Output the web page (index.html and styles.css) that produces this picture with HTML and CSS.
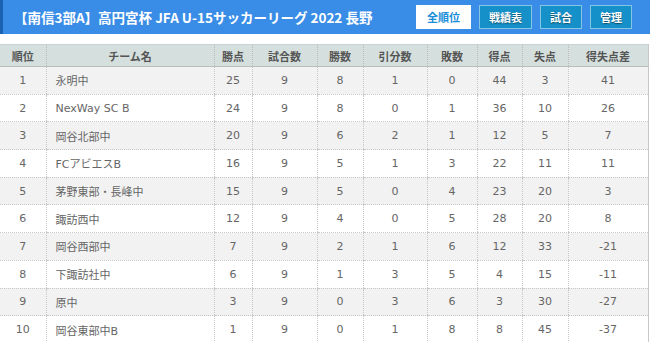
FILE: index.html
```html
<!DOCTYPE html>
<html lang="ja">
<head>
<meta charset="utf-8">
<link rel="stylesheet" href="styles.css">
</head>
<body>
<div class="bar">
  <h1 class="title">【南信3部A】高円宮杯 JFA U-15サッカーリーグ 2022 長野</h1>
  <nav class="nav">
    <span class="btn active">全順位</span>
    <span class="btn">戦績表</span>
    <span class="btn">試合</span>
    <span class="btn">管理</span>
  </nav>
</div>
<table class="standings">
  <colgroup>
    <col style="width:46px"><col style="width:168px"><col style="width:38px"><col style="width:65px"><col style="width:46px"><col style="width:64px"><col style="width:50px"><col style="width:45px"><col style="width:46px"><col style="width:80px">
  </colgroup>
  <thead>
    <tr><th>順位</th><th>チーム名</th><th>勝点</th><th>試合数</th><th>勝数</th><th>引分数</th><th>敗数</th><th>得点</th><th>失点</th><th>得失点差</th></tr>
  </thead>
  <tbody>
    <tr><td>1</td><td class="name">永明中</td><td>25</td><td>9</td><td>8</td><td>1</td><td>0</td><td>44</td><td>3</td><td>41</td></tr>
    <tr><td>2</td><td class="name">NexWay SC B</td><td>24</td><td>9</td><td>8</td><td>0</td><td>1</td><td>36</td><td>10</td><td>26</td></tr>
    <tr><td>3</td><td class="name">岡谷北部中</td><td>20</td><td>9</td><td>6</td><td>2</td><td>1</td><td>12</td><td>5</td><td>7</td></tr>
    <tr><td>4</td><td class="name">FCアビエスB</td><td>16</td><td>9</td><td>5</td><td>1</td><td>3</td><td>22</td><td>11</td><td>11</td></tr>
    <tr><td>5</td><td class="name">茅野東部・長峰中</td><td>15</td><td>9</td><td>5</td><td>0</td><td>4</td><td>23</td><td>20</td><td>3</td></tr>
    <tr><td>6</td><td class="name">諏訪西中</td><td>12</td><td>9</td><td>4</td><td>0</td><td>5</td><td>28</td><td>20</td><td>8</td></tr>
    <tr><td>7</td><td class="name">岡谷西部中</td><td>7</td><td>9</td><td>2</td><td>1</td><td>6</td><td>12</td><td>33</td><td>-21</td></tr>
    <tr><td>8</td><td class="name">下諏訪社中</td><td>6</td><td>9</td><td>1</td><td>3</td><td>5</td><td>4</td><td>15</td><td>-11</td></tr>
    <tr><td>9</td><td class="name">原中</td><td>3</td><td>9</td><td>0</td><td>3</td><td>6</td><td>3</td><td>30</td><td>-27</td></tr>
    <tr><td>10</td><td class="name">岡谷東部中B</td><td>1</td><td>9</td><td>0</td><td>1</td><td>8</td><td>8</td><td>45</td><td>-37</td></tr>
  </tbody>
</table>
</body>
</html>
```
FILE: styles.css
```css
html, body {
  margin: 0;
  padding: 0;
  background: #fff;
}
body {
  font-family: "DejaVu Sans", "Noto Sans CJK JP", sans-serif;
  color: #666;
  width: 650px;
  overflow: hidden;
}
.bar {
  height: 34px;
  background: #3a8de6;
  border-left: 3px solid #1b62b2;
  display: flex;
  align-items: center;
  justify-content: space-between;
  padding: 0 18px 0 11px;
  box-sizing: border-box;
}
.title {
  margin: 0;
  font-family: "Noto Sans CJK JP", sans-serif;
  font-size: 13.5px;
  font-weight: bold;
  color: #fff;
  white-space: nowrap;
}
.nav {
  display: flex;
  gap: 8px;
}
.btn {
  display: flex;
  align-items: center;
  justify-content: center;
  height: 24px;
  box-sizing: border-box;
  padding: 0 9px;
  background: #1590c8;
  border: 1px solid #86c4e4;
  color: #fff;
  font-family: "Noto Sans CJK JP", sans-serif;
  font-size: 11px;
  font-weight: bold;
  text-shadow: 0 1px 1px rgba(0,0,0,0.45);
}
.btn.active {
  background: #fff;
  color: #1a8ed8;
  border-color: #fff;
  padding: 0 10px;
  text-shadow: none;
}
.standings {
  margin-top: 10px;
  width: 648px;
  border-collapse: collapse;
  table-layout: fixed;
  font-size: 11px;
  border-top: 1px solid #c9d3d2;
  border-right: 1px solid #c8c8c8;
}
.standings th {
  height: 21px;
  background: #d5e0de;
  color: #555;
  font-family: "Noto Sans CJK JP", sans-serif;
  font-weight: bold;
  font-size: 11px;
  padding: 0;
  border-left: 1px dotted #bbb;
  border-bottom: 1px solid #b8c0bf;
}
.standings th:first-child,
.standings td:first-child { border-left: none; }
.standings td {
  height: 26.7px;
  padding: 0;
  text-align: center;
  border-left: 1px dotted #c8c8c8;
  border-bottom: 1px dotted #c8c8c8;
  white-space: nowrap;
}
.standings td.name {
  text-align: left;
  padding-left: 9px;
}
.standings tbody tr:nth-child(odd) td { background: #f2f2f2; }
.standings tbody tr:nth-child(even) td { background: #fff; }
```
